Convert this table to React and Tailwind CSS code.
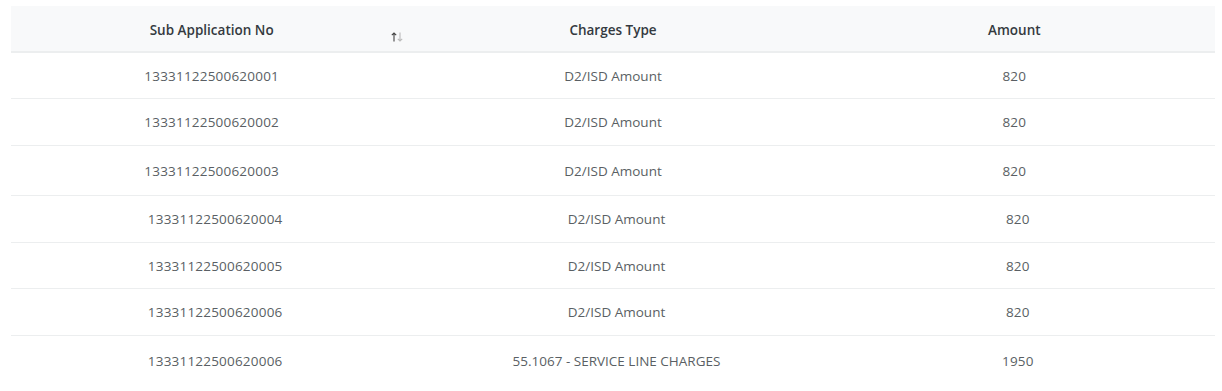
const rows = [
  { id: "13331122500620001", type: "D2/ISD Amount", amount: "820", h: "h-[46px]" },
  { id: "13331122500620002", type: "D2/ISD Amount", amount: "820", h: "h-[47px]" },
  { id: "13331122500620003", type: "D2/ISD Amount", amount: "820", h: "h-[50px]" },
  { id: "13331122500620004", type: "D2/ISD Amount", amount: "820", h: "h-[47px]", shift: true },
  { id: "13331122500620005", type: "D2/ISD Amount", amount: "820", h: "h-[46px]", shift: true },
  { id: "13331122500620006", type: "D2/ISD Amount", amount: "820", h: "h-[47px]", shift: true },
  { id: "13331122500620006", type: "55.1067 - SERVICE LINE CHARGES", amount: "1950", h: "h-[50px]", shift: true },
]

const SortIcon = () => (
  <svg width="12" height="10" viewBox="0 0 12 10" className="inline-block">
    <path d="M3 9.5V1M0.8 3.2L3 1l2.2 2.2" stroke="#444" strokeWidth="1.1" fill="none" />
    <path d="M9 0.5V9M6.8 6.8L9 9l2.2-2.2" stroke="#bbb" strokeWidth="1.1" fill="none" />
  </svg>
)

export default function App() {
  return (
    <div className="min-h-screen bg-white pt-[6px] pl-[11px] pr-[7px] font-['Open_Sans',sans-serif] text-[13.5px]">
      <table className="w-full table-fixed border-collapse">
        <thead>
          <tr className="h-[46px] bg-[#f8f9fa] border-b-2 border-[#eceeef]">
            <th className="relative pt-[4px] font-semibold text-[#343a40] text-center">
              Sub Application No
              <span className="absolute right-[9px] top-[24px] leading-none">
                <SortIcon />
              </span>
            </th>
            <th className="pt-[4px] font-semibold text-[#343a40] text-center">Charges Type</th>
            <th className="pt-[4px] font-semibold text-[#343a40] text-center">Amount</th>
          </tr>
        </thead>
        <tbody>
          {rows.map((row, i) => (
            <tr key={i} className={`${row.h} border-b border-[#eceeef] last:border-b-0 text-[#5a5f64]`}>
              <td className={`pt-[2px] text-center tracking-[0.2px] ${row.shift ? "pl-[7px]" : ""}`}>{row.id}</td>
              <td className={`pt-[2px] text-center ${row.shift ? "pl-[7px]" : ""}`}>{row.type}</td>
              <td className={`pt-[2px] text-center tracking-[0.2px] ${row.shift ? "pl-[7px]" : ""}`}>{row.amount}</td>
            </tr>
          ))}
        </tbody>
      </table>
    </div>
  )
}
